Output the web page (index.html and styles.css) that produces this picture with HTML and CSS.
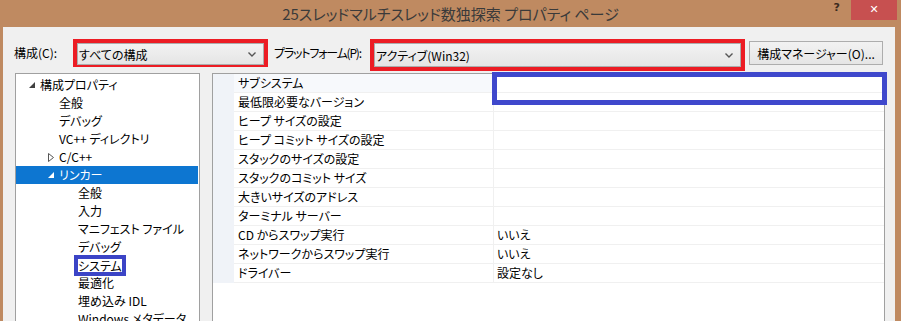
FILE: index.html
```html
<!DOCTYPE html>
<html lang="ja">
<head>
  <meta charset="UTF-8">
  <title>25スレッドマルチスレッド数独探索 プロパティ ページ</title>
  <link rel="stylesheet" href="styles.css">
</head>
<body>
  <div class="window">
    <div class="titlebar">
      <div></div>
      <div class="title">25スレッドマルチスレッド数独探索 プロパティ ページ</div>
      <div class="controls">
        <span class="help">?</span>
        <span class="close">✕</span>
      </div>
    </div>

    <div class="client">
      <div class="toolbar">
        <label class="lbl lbl-config">構成(C):</label>
        <div class="mark-red box-config">
          <div class="combo">
            <span>すべての構成</span>
            <svg class="chev" width="8" height="5" viewBox="0 0 8 5"><polyline points="0.5,0.5 4,4 7.5,0.5" fill="none" stroke="#555" stroke-width="1.4"/></svg>
          </div>
        </div>
        <label class="lbl lbl-platform">プラットフォーム(P):</label>
        <div class="mark-red box-platform">
          <div class="combo">
            <span>アクティブ(Win32)</span>
            <svg class="chev" width="8" height="5" viewBox="0 0 8 5"><polyline points="0.5,0.5 4,4 7.5,0.5" fill="none" stroke="#555" stroke-width="1.4"/></svg>
          </div>
        </div>
        <button class="btn">構成マネージャー(O)...</button>
      </div>

      <div class="panels">
        <ul class="tree">
          <li class="lv0"><span class="arrow"><svg width="6" height="6" viewBox="0 0 6 6"><polygon points="6,0 6,6 0,6" fill="#404040"/></svg></span>構成プロパティ</li>
          <li class="lv1"><span class="arrow"></span>全般</li>
          <li class="lv1"><span class="arrow"></span>デバッグ</li>
          <li class="lv1"><span class="arrow"></span>VC++ ディレクトリ</li>
          <li class="lv1"><span class="arrow"><svg width="6" height="9" viewBox="0 0 6 9"><polygon points="0.5,0.5 5.5,4.5 0.5,8.5" fill="none" stroke="#555" stroke-width="1"/></svg></span>C/C++</li>
          <li class="lv1 selected"><span class="arrow"><svg width="6" height="6" viewBox="0 0 6 6"><polygon points="6,0 6,6 0,6" fill="#fff"/></svg></span>リンカー</li>
          <li class="lv2"><span class="arrow"></span>全般</li>
          <li class="lv2"><span class="arrow"></span>入力</li>
          <li class="lv2"><span class="arrow"></span>マニフェスト ファイル</li>
          <li class="lv2"><span class="arrow"></span>デバッグ</li>
          <li class="lv2"><span class="arrow"></span><span class="mark-blue">システム</span></li>
          <li class="lv2"><span class="arrow"></span>最適化</li>
          <li class="lv2"><span class="arrow"></span>埋め込み IDL</li>
          <li class="lv2"><span class="arrow"></span>Windows メタデータ</li>
        </ul>

        <div class="props">
          <div class="row current"><span class="strip"></span><span class="name">サブシステム</span><span class="value"></span></div>
          <div class="row"><span class="strip"></span><span class="name">最低限必要なバージョン</span><span class="value"></span></div>
          <div class="row"><span class="strip"></span><span class="name">ヒープ サイズの設定</span><span class="value"></span></div>
          <div class="row"><span class="strip"></span><span class="name">ヒープ コミット サイズの設定</span><span class="value"></span></div>
          <div class="row"><span class="strip"></span><span class="name">スタックのサイズの設定</span><span class="value"></span></div>
          <div class="row"><span class="strip"></span><span class="name">スタックのコミット サイズ</span><span class="value"></span></div>
          <div class="row"><span class="strip"></span><span class="name">大きいサイズのアドレス</span><span class="value"></span></div>
          <div class="row"><span class="strip"></span><span class="name">ターミナル サーバー</span><span class="value"></span></div>
          <div class="row"><span class="strip"></span><span class="name">CD からスワップ実行</span><span class="value">いいえ</span></div>
          <div class="row"><span class="strip"></span><span class="name">ネットワークからスワップ実行</span><span class="value">いいえ</span></div>
          <div class="row"><span class="strip"></span><span class="name">ドライバー</span><span class="value">設定なし</span></div>
          <div class="mark-blue-box"></div>
        </div>
      </div>
    </div>
  </div>
</body>
</html>
```

FILE: styles.css
```css
body {
  margin: 0;
  background: #bf8a61;
  font-family: "Noto Sans CJK JP", sans-serif;
  font-feature-settings: "palt";
  font-size: 12px;
  color: #000;
}
.window {
  width: 901px;
  height: 321px;
  overflow: hidden;
}
.titlebar {
  height: 27px;
  display: grid;
  grid-template-columns: 1fr auto 1fr;
  align-items: start;
}
.title {
  font-size: 15px;
  line-height: 27px;
  color: #3a3a3a;
}
.controls {
  display: flex;
  justify-content: flex-end;
  align-items: flex-start;
  padding-right: 4px;
}
.help {
  font-family: "DejaVu Sans", sans-serif;
  font-weight: bold;
  font-size: 11px;
  color: #3a2a1e;
  line-height: 16px;
  margin-right: 11px;
}
.close {
  width: 46px;
  height: 20px;
  background: #c75050;
  color: #fff;
  font-family: "DejaVu Sans", sans-serif;
  font-size: 11px;
  font-weight: bold;
  line-height: 19px;
  text-align: center;
}
.client {
  margin: 0 6px 0 3px;
  height: 294px;
  background: #f0f0f0;
  padding: 12px 0 0 11px;
  box-sizing: border-box;
}
.toolbar {
  display: flex;
  align-items: flex-start;
}
.lbl {
  height: 28px;
  line-height: 28px;
  white-space: nowrap;
  flex: none;
}
.lbl-config {
  width: 59px;
}
.lbl-platform {
  width: 96px;
  margin-left: 6px;
  letter-spacing: -1.2px;
}
.mark-red {
  border: 4px solid #ec1c24;
  box-sizing: border-box;
  display: flex;
  flex: none;
}
.box-config {
  width: 195px;
  height: 28px;
}
.box-platform {
  width: 375px;
  height: 32px;
}
.combo {
  flex: 1;
  border: 1px solid #acacac;
  background: linear-gradient(#f2f2f2, #e5e5e5);
  display: flex;
  align-items: center;
  justify-content: space-between;
  padding: 0 7px 0 1px;
  height: 20px;
}
.box-platform .combo {
  height: 22px;
}
.btn {
  margin: 2px 0 0 4px;
  width: 134px;
  height: 24px;
  border: 1px solid #adadad;
  background: linear-gradient(#f2f2f2, #e5e5e5);
  font: inherit;
  padding: 0;
  color: #000;
  flex: none;
}
.panels {
  display: flex;
  align-items: flex-start;
  margin-top: 2px;
  gap: 12px;
}
.tree {
  list-style: none;
  margin: 0 0 0 1px;
  padding: 2px 0 0;
  width: 185px;
  height: 260px;
  box-sizing: border-box;
  background: #fff;
  border: 1px solid #a0a0a0;
  flex: none;
}
.tree li {
  height: 18px;
  line-height: 18px;
  white-space: nowrap;
  display: flex;
  align-items: center;
  margin-right: 1px;
}
.arrow {
  width: 11px;
  flex: none;
  display: flex;
  align-items: center;
}
.lv0 { padding-left: 13px; }
.lv1 { padding-left: 32px; }
.lv2 { padding-left: 51px; }
.tree li.selected {
  background: #0d76d1;
  color: #fff;
}
.mark-blue {
  outline: 4px solid #3b44c6;
  outline-offset: -1px;
  margin-left: -1px;
  padding: 0 1px;
  line-height: 15px;
}
.props {
  position: relative;
  width: 673px;
  height: 260px;
  box-sizing: border-box;
  background: #fff;
  border: 1px solid #a0a0a0;
  flex: none;
}
.row {
  display: grid;
  grid-template-columns: 21px 259px 1fr;
  height: 19px;
  line-height: 18px;
}
.strip {
  background: #f0f3f8;
}
.name {
  padding-left: 4px;
  border-bottom: 1px solid #f0f0f0;
  white-space: nowrap;
}
.value {
  padding-left: 3px;
  border-left: 1px solid #f0f0f0;
  border-bottom: 1px solid #f0f0f0;
}
.row.current .name {
  background: #f7f9fc;
}
.mark-blue-box {
  position: absolute;
  left: 279px;
  top: -2px;
  width: 395px;
  height: 33px;
  box-sizing: border-box;
  border: 5px solid #3f48cc;
}
```
